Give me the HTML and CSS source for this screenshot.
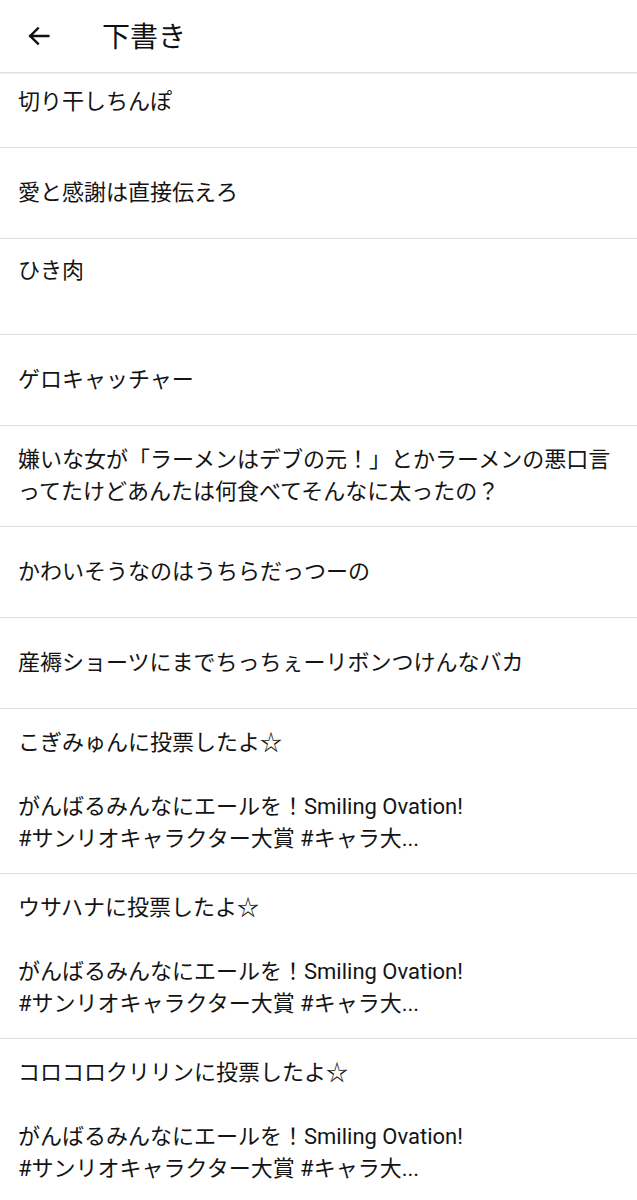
FILE: index.html
```html
<!DOCTYPE html>
<html lang="ja">
<head>
    <meta charset="UTF-8">
    <meta name="viewport" content="width=device-width, initial-scale=1.0">
    <title>下書き</title>
    <link rel="stylesheet" href="styles.css">
</head>
<body>
    <!-- Top bar -->
    <header class="topbar">
        <button class="back-btn" aria-label="戻る">
            <svg width="28" height="28" viewBox="0 0 24 24">
                <path d="M20 12H4.5M11 5.5L4.5 12L11 18.5" fill="none" stroke="#111" stroke-width="2.1" stroke-linecap="square"/>
            </svg>
        </button>
        <h1 class="title">下書き</h1>
    </header>

    <!-- Draft list -->
    <main class="draft-list">
        <div class="draft"><p>切り干しちんぽ</p></div>
        <div class="draft"><p>愛と感謝は直接伝えろ</p></div>
        <div class="draft draft-short"><p>ひき肉<br>&nbsp;</p></div>
        <div class="draft"><p>ゲロキャッチャー</p></div>
        <div class="draft"><p>嫌いな女が「ラーメンはデブの元！」とかラーメンの悪口言ってたけどあんたは何食べてそんなに太ったの？</p></div>
        <div class="draft"><p>かわいそうなのはうちらだっつーの</p></div>
        <div class="draft"><p>産褥ショーツにまでちっちぇーリボンつけんなバカ</p></div>
        <div class="draft"><p>こぎみゅんに投票したよ☆<br>&nbsp;<br>がんばるみんなにエールを！Smiling Ovation!<br>#サンリオキャラクター大賞 #キャラ大...</p></div>
        <div class="draft"><p>ウサハナに投票したよ☆<br>&nbsp;<br>がんばるみんなにエールを！Smiling Ovation!<br>#サンリオキャラクター大賞 #キャラ大...</p></div>
        <div class="draft"><p>コロコロクリリンに投票したよ☆<br>&nbsp;<br>がんばるみんなにエールを！Smiling Ovation!<br>#サンリオキャラクター大賞 #キャラ大...</p></div>
    </main>
</body>
</html>
```

FILE: styles.css
```css
/* Drafts screen */
body {
    margin: 0;
    padding: 0;
    background-color: #fff;
    color: #141414;
    font-family: Roboto, "Noto Sans CJK JP", sans-serif;
    overflow: hidden;
}

.topbar {
    position: relative;
    z-index: 1;
    height: 72px;
    display: flex;
    align-items: center;
    background-color: #fff;
    border-bottom: 1px solid #e2e2e2;
    box-shadow: 0 1px 0 #ececec;
}

.back-btn {
    width: 28px;
    height: 28px;
    margin-left: 25px;
    margin-top: -1px;
    padding: 0;
    border: none;
    background: none;
    display: flex;
}

.title {
    margin: -2px 0 0 49px;
    font-family: "Noto Sans CJK JP", sans-serif;
    font-size: 28px;
    font-weight: 400;
    color: #111;
    line-height: 1;
}

.draft-list {
    margin-top: -16px;
}

.draft {
    box-sizing: border-box;
    min-height: 91px;
    display: flex;
    flex-direction: column;
    justify-content: center;
    padding: 18px 18px 18px;
    border-bottom: 1px solid #dedede;
}

.draft-short {
    padding-top: 16px;
    padding-bottom: 15px;
}

.draft p {
    margin: 0;
    font-size: 22px;
    line-height: 32px;
}
```
